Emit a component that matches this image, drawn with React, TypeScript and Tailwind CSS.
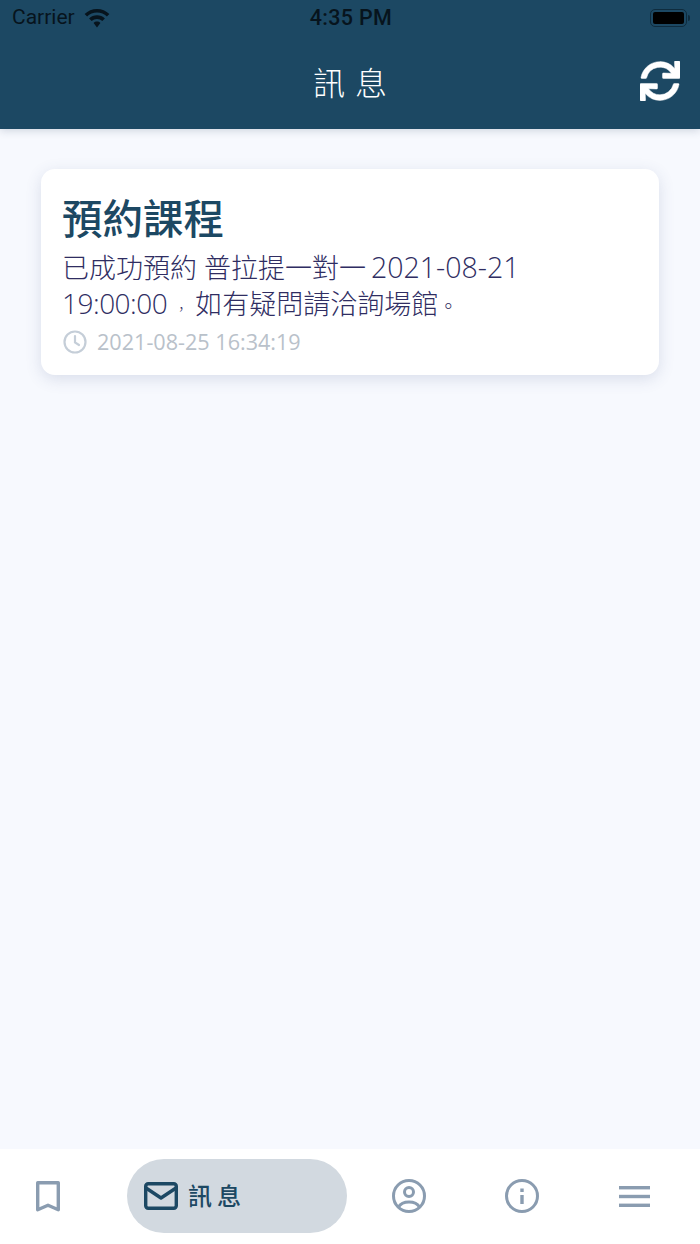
import { FaSync } from "react-icons/fa";

const cjk = "font-['Open_Sans','Noto_Sans_CJK_TC',sans-serif]";

function WifiIcon() {
  return (
    <svg width="26" height="19" viewBox="0 0 26 19" fill="#07141d">
      <path d="M13 0C8.2 0 3.9 1.9.6 5l2.500 2.600C5.700 5.100 9.200 3.600 13 3.600s7.300 1.500 9.900 4L25.400 5C22.100 1.900 17.800 0 13 0z" />
      <path d="M13 6.300c-3 0-5.800 1.200-7.900 3.100l2.600 2.600c1.400-1.300 3.300-2.100 5.300-2.100s3.900.8 5.300 2.100l2.600-2.600c-2.100-1.900-4.900-3.100-7.900-3.100z" />
      <path d="M13 12.600c-1.300 0-2.500.5-3.400 1.300L13 18.500l3.400-4.600c-.9-.8-2.100-1.300-3.400-1.300z" />
    </svg>
  );
}

function BatteryIcon() {
  return (
    <div className="flex items-center gap-[1px]">
      <div className="flex h-[18px] w-[37px] items-center rounded-[5px] border border-[#0f2c3e] p-[2px]">
        <div className="h-full w-full rounded-[2px] bg-black" />
      </div>
      <div className="h-[6px] w-[2px] rounded-r-sm bg-[#0f2c3e]" />
    </div>
  );
}

function NavIcon({ children }: { children: React.ReactNode }) {
  return <div className="flex w-[113px] items-center justify-center">{children}</div>;
}

export default function App() {
  return (
    <div className={`flex h-[1244px] w-[700px] flex-col overflow-hidden bg-[#f7f9fe] ${cjk}`}>
      <header className="z-10 flex h-[129px] shrink-0 flex-col bg-[#1c4863] shadow-[0_2px_8px_rgba(40,60,90,0.18)]">
        <div className="grid h-[36px] grid-cols-[1fr_auto_1fr] items-center pl-3 pr-[10px] font-['Roboto',sans-serif] text-[#07141d]">
          <div className="flex items-center gap-[9px] text-[21px]">
            <span>Carrier</span>
            <WifiIcon />
          </div>
          <div className="text-center text-[21.500px] font-medium tracking-[0.3px]">4:35 PM</div>
          <div className="flex justify-end">
            <BatteryIcon />
          </div>
        </div>
        <div className="grid flex-1 grid-cols-[1fr_auto_1fr] items-center px-[20px]">
          <div />
          <div className="mr-[-10px] text-[32px] font-light leading-none tracking-[10px] text-white">訊息</div>
          <div className="mb-[4px] flex justify-end">
            <FaSync className="text-[40px] text-white" stroke="currentColor" strokeWidth={6} />
          </div>
        </div>
      </header>

      <main className="flex-1 px-[41px] pt-[40px]">
        <div className="flex h-[206px] flex-col rounded-[14px] bg-white px-[21px] pt-[26px] shadow-[0_4px_16px_rgba(60,80,130,0.16)]">
          <h1 className="text-[40.500px] font-medium leading-[48px] text-[#1c4863]">預約課程</h1>
          <p className="mt-[7px] text-[27px] font-light leading-[36px] text-[#2f2d62]">
            已成功預約 普拉提一對一 <span className="ml-[-2px] text-[28.500px] leading-none">2021-08-21</span>
            <br />
            <span className="text-[28px] leading-none tracking-[-0.5px]">19:00:00</span>
            <span className="inline-block w-[28px] text-center text-[14px] leading-none">，</span>
            如有疑問請洽詢場館
            <span className="text-[20px] leading-none">。</span>
          </p>
          <div className="ml-[1px] mt-[4px] flex items-center gap-[10px] text-[21.600px] text-[#b9c1ca]">
            <svg width="24" height="24" viewBox="0 0 24 24" fill="none" stroke="#c5ced8" strokeWidth="2.200" strokeLinecap="round">
              <circle cx="12" cy="12" r="10.500" />
              <path d="M12 6v6.500l4 2.500" />
            </svg>
            <span>2021-08-25 16:34:19</span>
          </div>
        </div>
      </main>

      <nav className="flex h-[95px] shrink-0 items-center bg-white pb-[1px]">
        <div className="flex w-[95px] items-center justify-center">
          <svg width="24" height="31" viewBox="0 0 24 31" fill="none" stroke="#8a9cb0" strokeWidth="3.400" strokeLinejoin="round">
            <path d="M1.700 1.700h20.600v27l-10.300-4.500-10.300 4.500z" />
          </svg>
        </div>
        <div className="ml-[32px] flex h-[74px] w-[220px] items-center gap-[10px] rounded-full bg-[#d2d9e0] pl-[17px]">
          <svg width="34" height="28" viewBox="0 0 34 28" fill="none" stroke="#1c4863" strokeWidth="3.400" strokeLinejoin="round">
            <rect x="1.700" y="1.700" width="30.600" height="24.600" rx="2.500" />
            <path d="M2 6l15 10L32 6" />
          </svg>
          <span className="text-[24px] font-medium leading-none tracking-[5px] text-[#1c4863]">訊息</span>
        </div>
        <div className="ml-[5px] flex">
          <NavIcon>
            <svg width="34" height="34" viewBox="0 0 34 34" fill="none" stroke="#8a9cb0" strokeWidth="3">
              <circle cx="17" cy="17" r="15.500" />
              <circle cx="17" cy="13" r="4.500" />
              <path d="M6.500 28c2-3.500 6-5 10.500-5s8.500 1.500 10.500 5" />
            </svg>
          </NavIcon>
          <NavIcon>
            <svg width="34" height="34" viewBox="0 0 34 34" fill="none" stroke="#8a9cb0" strokeWidth="3">
              <circle cx="17" cy="17" r="15.500" />
              <path d="M17 16v9M17 9.500V13" strokeWidth="3.400" />
            </svg>
          </NavIcon>
          <NavIcon>
            <svg width="31" height="21" viewBox="0 0 31 21" fill="#8a9cb0">
              <rect y="0" width="31" height="3.400" />
              <rect y="8.800" width="31" height="3.400" />
              <rect y="17.600" width="31" height="3.400" />
            </svg>
          </NavIcon>
        </div>
      </nav>
    </div>
  );
}
